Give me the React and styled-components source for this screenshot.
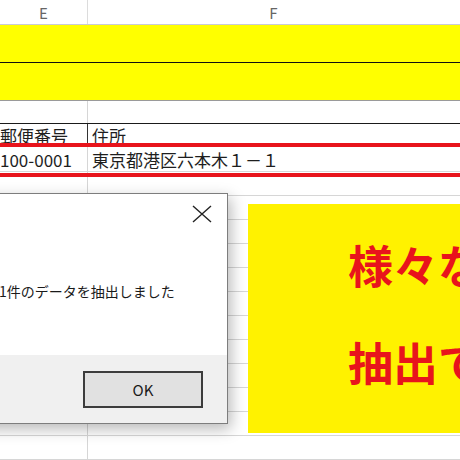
import React from 'react';
import styled, { createGlobalStyle } from 'styled-components';

const GlobalStyle = createGlobalStyle`
  html, body {
    margin: 0;
    padding: 0;
    background: #ffffff;
  }
  body {
    width: 460px;
    height: 460px;
    overflow: hidden;
    font-family: "Noto Sans CJK JP", "Noto Sans", sans-serif;
  }
`;

const Screen = styled.div`
  position: relative;
  width: 460px;
  height: 460px;
  overflow: hidden;
  background: #fff;
`;

const Sheet = styled.div`
  display: flex;
  flex-direction: column;
`;

const Row = styled.div`
  display: grid;
  grid-template-columns: 88px 1fr;
  height: ${(p) => p.$h}px;
  background: ${(p) => p.$bg || '#fff'};
  border-bottom: 1px solid ${(p) => p.$line || '#d6d6d6'};
  flex-shrink: 0;
`;

const Cell = styled.div`
  display: flex;
  align-items: center;
  justify-content: ${(p) => (p.$center ? 'center' : 'flex-start')};
  padding-left: ${(p) => p.$pad || 0}px;
  border-right: 1px solid ${(p) => p.$divider || 'transparent'};
  font-size: ${(p) => p.$size || 17}px;
  color: ${(p) => p.$color || '#1e1e1e'};
  white-space: nowrap;
  overflow: hidden;
`;

const Highlight = styled.div`
  position: absolute;
  left: -10px;
  right: -10px;
  top: 143px;
  height: 26px;
  border-top: 4px solid #e8141c;
  border-bottom: 4px solid #e8141c;
  pointer-events: none;
`;

const Dialog = styled.div`
  position: absolute;
  left: -120px;
  top: 193px;
  width: 346px;
  height: 229px;
  background: #fff;
  border: 1px solid #7d7d7d;
  display: flex;
  flex-direction: column;
  box-shadow: 3px 5px 14px rgba(0, 0, 0, 0.28);
`;

const TitleBar = styled.div`
  height: 40px;
  display: flex;
  justify-content: flex-end;
  align-items: center;
  padding-right: 15px;
`;

const Message = styled.div`
  flex: 1;
  padding-left: 118px;
  padding-top: 47px;
  font-size: 14px;
  color: #1a1a1a;
  white-space: nowrap;
`;

const Footer = styled.div`
  height: 68px;
  background: #f0f0f0;
  display: flex;
  align-items: center;
  padding-left: 202px;
`;

const OkButton = styled.button`
  width: 120px;
  height: 37px;
  background: #e1e1e1;
  border: 2px solid #3c3c3c;
  font-family: "Noto Sans CJK JP", "Noto Sans", sans-serif;
  font-size: 15px;
  color: #1a1a1a;
  padding: 0;
`;

const Banner = styled.div`
  position: absolute;
  left: 248px;
  top: 204px;
  width: 260px;
  height: 229px;
  background: #fff200;
  padding: 12px 0 0 100px;
  box-sizing: border-box;
  overflow: hidden;
`;

const BannerLine = styled.div`
  font-size: 45px;
  font-weight: 700;
  line-height: 97px;
  color: #e8141c;
  white-space: nowrap;
`;

const CloseIcon = () => (
  <svg width="20" height="18" viewBox="0 0 20 18">
    <path d="M1 1 L19 17 M19 1 L1 17" stroke="#222" strokeWidth="1.4" fill="none" />
  </svg>
);

const App = () => {
  const emptyRows = Array.from({ length: 12 });
  return (
    <Screen>
      <GlobalStyle />
      <Sheet>
        <Row $h={24} $line="#c9cbd6">
          <Cell $center $divider="#dcdcdc" $size={15} $color="#666">E</Cell>
          <Cell $center $size={15} $color="#666">F</Cell>
        </Row>
        <Row $h={37} $bg="#ffff00" $line="#111">
          <Cell />
          <Cell />
        </Row>
        <Row $h={37} $bg="#ffff00" $line="#9a9a9a">
          <Cell />
          <Cell />
        </Row>
        <Row $h={22} $line="#1a1a1a">
          <Cell $divider="#d6d6d6" />
          <Cell />
        </Row>
        <Row $h={22}>
          <Cell $divider="#333">郵便番号</Cell>
          <Cell $pad={4}>住所</Cell>
        </Row>
        <Row $h={24}>
          <Cell $divider="#d6d6d6">100-0001</Cell>
          <Cell $pad={4}>東京都港区六本木１－１</Cell>
        </Row>
        {emptyRows.map((_, i) => (
          <Row key={i} $h={23}>
            <Cell $divider="#d6d6d6" />
            <Cell />
          </Row>
        ))}
      </Sheet>
      <Highlight />
      <Dialog>
        <TitleBar>
          <CloseIcon />
        </TitleBar>
        <Message>1件のデータを抽出しました</Message>
        <Footer>
          <OkButton>OK</OkButton>
        </Footer>
      </Dialog>
      <Banner>
        <BannerLine>様々な</BannerLine>
        <BannerLine>抽出できる</BannerLine>
      </Banner>
    </Screen>
  );
};

export default App;
